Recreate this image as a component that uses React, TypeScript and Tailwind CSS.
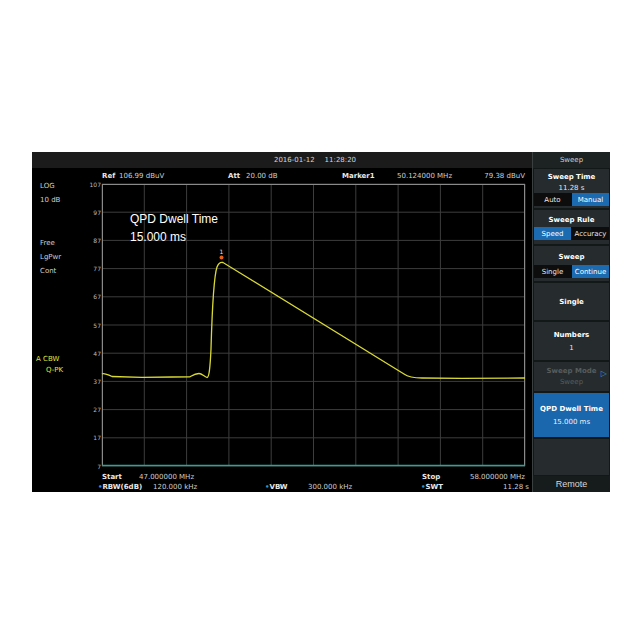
import React from "react";

const F = { fontFamily: '"DejaVu Sans", Verdana, sans-serif' };

const yLabels = ["107", "97", "87", "77", "67", "57", "47", "37", "27", "17", "7"];

function Plot() {
  const W = 423;
  const H = 282;
  const dy = H / 10;
  const dx = W / 10;
  const trace =
    "M0,190 C2,188.5 5,190.5 10,192.5 L40,193.3 L70,193 L88,192.8 C91,191 93,189.5 97,189.5 C100,189.5 102,192.5 105,193.5 C107,193.5 108,186 109,165 C110,130 112,92 115,83 C117,78 119,78 121,78.5 L302,190 C306,193 311,194 320,194 L360,194.3 L423,194";
  return (
    <svg width={W} height={H} viewBox={`0 0 ${W} ${H}`} style={{ overflow: "visible" }} className="block">
      {Array.from({ length: 11 }).map((_, i) => (
        <line key={"h" + i} x1={0} x2={W} y1={i * dy} y2={i * dy} stroke="#3d3d3d" strokeWidth={1} />
      ))}
      {Array.from({ length: 11 }).map((_, i) => (
        <line key={"v" + i} x1={i * dx} x2={i * dx} y1={0} y2={H} stroke="#3d3d3d" strokeWidth={1} />
      ))}
      <rect x={0.5} y={0.5} width={W - 1} height={H - 1} fill="none" stroke="#8a8a8a" strokeWidth={1} />
      <line x1={0} x2={W} y1={H - 0.5} y2={H - 0.5} stroke="#2aa59c" strokeWidth={1.5} />
      {yLabels.map((l, i) => (
        <text key={l} x={-1} y={i * dy + 2.5} textAnchor="end" fontSize={6} fill="#bdbdbd" fontFamily='"DejaVu Sans", sans-serif'>
          {l}
        </text>
      ))}
      <path d={trace} fill="none" stroke="#d9d936" strokeWidth={1.3} />
      <circle cx={119.5} cy={73.5} r={2} fill="#e0601e" />
      <text x={119.5} y={70} textAnchor="middle" fontSize={6} fill="#e6e6e6" fontFamily='"DejaVu Sans", sans-serif'>
        1
      </text>
    </svg>
  );
}

function Toggle({ a, b, active }: { a: string; b: string; active: 0 | 1 }) {
  return (
    <div className="flex h-[13px] gap-[1px] bg-[#0d0d0d]">
      <div className={`flex-1 flex items-center justify-center ${active === 0 ? "bg-[#1c6ab0] text-white" : "text-[#e8e8e8]"}`}>{a}</div>
      <div className={`flex-1 flex items-center justify-center ${active === 1 ? "bg-[#1c6ab0] text-white" : "text-[#e8e8e8]"}`}>{b}</div>
    </div>
  );
}

export default function App() {
  return (
    <div className="w-[640px] h-[640px] bg-white pt-[152px] pl-[32px]" style={F}>
      <div className="flex w-[578px] h-[340px] bg-black text-[7px] leading-[10px] text-[#cfcfcf]">
        {/* main area */}
        <div className="w-[500px] flex flex-col">
          <div className="h-[16px] bg-[#1b1b1b] flex items-center justify-center text-[#d6d6d6] pl-[66px]">
            <span>2016-01-12</span>
            <span className="ml-[10px]">11:28:20</span>
          </div>
          <div className="flex">
            <div className="w-[70px] flex flex-col pt-[11px]">
              <div className="pl-[8px] leading-[14px]">LOG</div>
              <div className="pl-[8px] leading-[14px]">10 dB</div>
              <div className="pl-[8px] leading-[14px] mt-[29px]">Free</div>
              <div className="pl-[8px] leading-[14px]">LgPwr</div>
              <div className="pl-[8px] leading-[14px]">Cont</div>
              <div className="pl-[4px] leading-[11px] mt-[76px] text-[#e4e43a]">A CBW</div>
              <div className="pl-[14px] leading-[11px] text-[#e4e43a]">Q-PK</div>
            </div>
            <div className="flex flex-col">
              <div className="h-[16px] flex items-center whitespace-nowrap">
                <span className="w-[17px] font-bold text-[#e8e8e8]">Ref</span>
                <span className="w-[109px]">106.99 dBuV</span>
                <span className="w-[18px] font-bold text-[#e8e8e8]">Att</span>
                <span className="w-[96px]">20.00 dB</span>
                <span className="w-[55px] font-bold text-[#e8e8e8]">Marker1</span>
                <span className="w-[84px]">50.124000 MHz</span>
                <span className="w-[44px] text-right">79.38 dBuV</span>
              </div>
              <div className="relative">
                <Plot />
                <div className="absolute left-[28px] top-[26px] text-[12px] leading-[18px] text-white" style={{ fontFamily: '"Liberation Sans", Arial, sans-serif' }}>
                  <div>QPD Dwell Time</div>
                  <div>15.000 ms</div>
                </div>
              </div>
            </div>
          </div>
          <div className="flex flex-col pl-[66px] pt-[6px] whitespace-nowrap">
            <div className="flex h-[10px] items-center">
              <span className="w-[41px] pl-[4px] font-bold text-[#e8e8e8]">Start</span>
              <span className="w-[283px]">47.000000 MHz</span>
              <span className="w-[47px] font-bold text-[#e8e8e8]">Stop</span>
              <span className="w-[56px] text-right">58.000000 MHz</span>
            </div>
            <div className="flex h-[10px] items-center">
              <span className="w-[55px] font-bold text-[#e8e8e8]">
                <span className="text-[#2f8fd8]">•</span>RBW(6dB)
              </span>
              <span className="w-[112px]">120.000 kHz</span>
              <span className="w-[43px] font-bold text-[#e8e8e8]">
                <span className="text-[#2f8fd8]">•</span>VBW
              </span>
              <span className="w-[113px]">300.000 kHz</span>
              <span className="w-[30px] font-bold text-[#e8e8e8]">
                <span className="text-[#2f8fd8]">•</span>SWT
              </span>
              <span className="w-[78px] text-right">11.28 s</span>
            </div>
          </div>
        </div>
        {/* right panel */}
        <div className="w-[78px] flex flex-col bg-[#121718] border-l border-[#3a3f40] text-center">
          <div className="h-[16px] bg-[#1d2223] flex items-center justify-center text-[#cfcfcf]">Sweep</div>
          <div className="flex flex-col gap-[2px] pt-[1px] px-[1px] flex-1">
            <div className="h-[39px] bg-[#262c2d] flex flex-col">
              <div className="font-bold text-white leading-[12px] pt-[2px]">Sweep Time</div>
              <div className="text-[#e6e6e6] leading-[10px]">11.28 s</div>
              <div className="mt-auto mb-[2px]"><Toggle a="Auto" b="Manual" active={1} /></div>
            </div>
            <div className="h-[34px] bg-[#262c2d] flex flex-col">
              <div className="font-bold text-white leading-[12px] pt-[4px]">Sweep Rule</div>
              <div className="mt-auto mb-[4px]"><Toggle a="Speed" b="Accuracy" active={0} /></div>
            </div>
            <div className="h-[35px] bg-[#262c2d] flex flex-col">
              <div className="font-bold text-white leading-[12px] pt-[5px]">Sweep</div>
              <div className="mt-auto mb-[3px]"><Toggle a="Single" b="Continue" active={1} /></div>
            </div>
            <div className="h-[37px] bg-[#262c2d] flex items-center justify-center font-bold text-white">Single</div>
            <div className="h-[38px] bg-[#262c2d] flex flex-col items-center justify-center">
              <div className="font-bold text-white leading-[14px]">Numbers</div>
              <div className="text-[#e6e6e6] leading-[12px]">1</div>
            </div>
            <div className="h-[29px] bg-[#262c2d] flex flex-col items-center justify-center relative text-[#575c5d]">
              <div className="font-bold leading-[12px]">Sweep Mode</div>
              <div className="leading-[11px]">Sweep</div>
              <span className="absolute right-[2px] top-[7px] text-[#2f8fd8] text-[8px]">▷</span>
            </div>
            <div className="h-[44px] bg-[#1b67ad] flex flex-col items-center justify-center">
              <div className="font-bold text-white leading-[14px]">QPD Dwell Time</div>
              <div className="text-[#f0f0f0] leading-[12px]">15.000 ms</div>
            </div>
            <div className="h-[36px] bg-[#262c2d]" />
          </div>
          <div className="h-[16px] bg-[#161b1c] flex items-center justify-center text-[9px] text-[#d8d8d8]" style={{ fontFamily: '"Liberation Sans", Arial, sans-serif' }}>
            Remote
          </div>
        </div>
      </div>
    </div>
  );
}
